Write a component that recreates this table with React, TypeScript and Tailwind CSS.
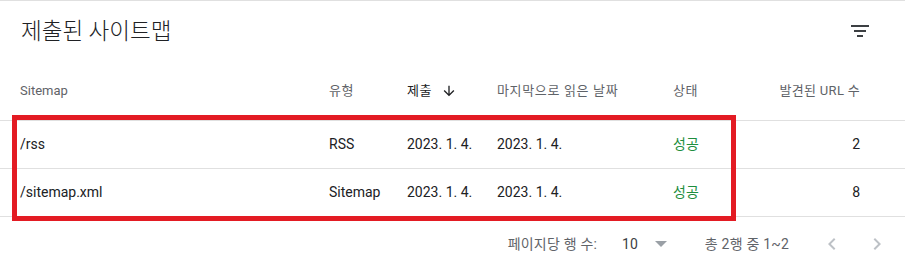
import React from "react";

const font = { fontFamily: "Roboto, 'Noto Sans CJK KR', sans-serif" };

function FilterIcon() {
  return (
    <svg width="24" height="24" viewBox="0 0 24 24" fill="#3c4043">
      <path d="M9 18h6v-2H9v2zM3 6v2h18V6H3zm3 7h12v-2H6v2z" />
    </svg>
  );
}

function ArrowDown() {
  return (
    <svg width="16" height="16" viewBox="0 0 24 24" fill="#202124">
      <path d="M20 12l-1.41-1.41L13 16.17V4h-2v12.17l-5.58-5.59L4 12l8 8 8-8z" />
    </svg>
  );
}

function Chevron({ dir }: { dir: "left" | "right" }) {
  return (
    <svg width="24" height="24" viewBox="0 0 24 24" fill="#bdc1c6">
      {dir === "left" ? (
        <path d="M15.41 7.41L14 6l-6 6 6 6 1.41-1.41L10.83 12z" />
      ) : (
        <path d="M10 6L8.59 7.41 13.17 12l-4.58 4.59L10 18l6-6z" />
      )}
    </svg>
  );
}

const rows = [
  { path: "/rss", type: "RSS", submitted: "2023. 1. 4.", read: "2023. 1. 4.", status: "성공", count: "2" },
  { path: "/sitemap.xml", type: "Sitemap", submitted: "2023. 1. 4.", read: "2023. 1. 4.", status: "성공", count: "8" },
];

export default function App() {
  return (
    <div className="relative w-[905px] h-[272px] bg-white overflow-hidden" style={font}>
      <div className="border-t border-[#e0e0e0]" />
      <div className="flex h-[60px] items-center justify-between pl-5 pr-[33px]">
        <h1 className="text-[22.5px] leading-none text-[#202124] font-light pl-[1px]">제출된 사이트맵</h1>
        <FilterIcon />
      </div>

      <div className="flex h-[60px] items-center border-b border-[#e0e0e0] pl-5 pr-[45px] text-[13px] text-[#5f6368]">
        <div className="w-[309px]">Sitemap</div>
        <div className="w-[78px] tracking-[0.6px]">유형</div>
        <div className="w-[90px] flex items-center gap-[9px] text-[#202124] tracking-[0.6px]">
          <span>제출</span>
          <ArrowDown />
        </div>
        <div className="w-[176px] tracking-[0.65px]">마지막으로 읽은 날짜</div>
        <div className="w-[70px] tracking-[0.6px]">상태</div>
        <div className="flex-1 text-right tracking-[0.3px]">발견된 URL 수</div>
      </div>

      {rows.map((r) => (
        <div
          key={r.path}
          className="flex h-[48px] items-center border-b border-[#e0e0e0] pl-5 pr-[45px] text-[14px] text-[#202124]"
        >
          <div className="w-[309px]">{r.path}</div>
          <div className="w-[78px]">{r.type}</div>
          <div className="w-[90px]">{r.submitted}</div>
          <div className="w-[176px]">{r.read}</div>
          <div className="w-[70px] text-[#1e8e3e]">{r.status}</div>
          <div className="flex-1 text-right">{r.count}</div>
        </div>
      ))}

      <div className="flex h-[54px] items-center justify-end pr-[16px] text-[14px] text-[#5f6368]">
        <span className="tracking-[0.2px]">페이지당 행 수:</span>
        <span className="ml-[25px] text-[#3c4043]">10</span>
        <svg className="ml-[17px]" width="12" height="6" viewBox="0 0 12 6" fill="#9aa0a6">
          <path d="M0 0h12L6 6z" />
        </svg>
        <span className="ml-[38px] tracking-[0.2px]">총 2행 중 1~2</span>
        <div className="ml-[31px] flex gap-[21px]">
          <Chevron dir="left" />
          <Chevron dir="right" />
        </div>
      </div>

      <div className="absolute left-[12px] top-[115px] w-[724px] h-[106px] border-[5px] border-[#e31b23] pointer-events-none" />
    </div>
  );
}
